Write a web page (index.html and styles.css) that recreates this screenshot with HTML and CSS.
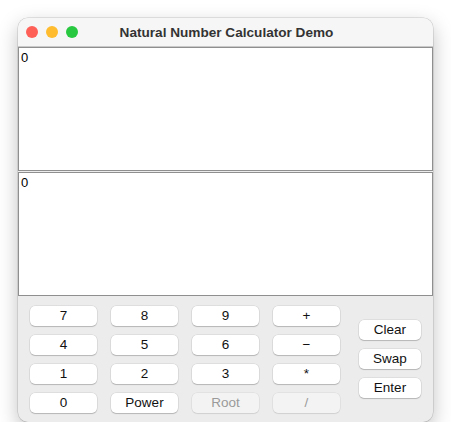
FILE: index.html
```html
<!DOCTYPE html>
<html>
<head>
<meta charset="utf-8">
<link rel="stylesheet" href="styles.css">
</head>
<body>
<div class="window">
  <div class="titlebar">
    <div class="lights">
      <span class="light red"></span>
      <span class="light yellow"></span>
      <span class="light green"></span>
    </div>
    <div class="title">Natural Number Calculator Demo</div>
  </div>
  <div class="area first">0</div>
  <div class="area second">0</div>
  <div class="panel">
    <div class="keys">
      <button class="btn">7</button>
      <button class="btn">8</button>
      <button class="btn">9</button>
      <button class="btn">+</button>
      <button class="btn">4</button>
      <button class="btn">5</button>
      <button class="btn">6</button>
      <button class="btn">&minus;</button>
      <button class="btn">1</button>
      <button class="btn">2</button>
      <button class="btn">3</button>
      <button class="btn">*</button>
      <button class="btn">0</button>
      <button class="btn">Power</button>
      <button class="btn disabled">Root</button>
      <button class="btn disabled">/</button>
    </div>
    <div class="side">
      <button class="btn">Clear</button>
      <button class="btn">Swap</button>
      <button class="btn">Enter</button>
    </div>
  </div>
</div>
</body>
</html>
```
FILE: styles.css
```css
html, body {
  margin: 0;
  padding: 0;
  background: #ffffff;
}
body {
  padding: 18px 0 0 18px;
  font-family: "Liberation Sans", Arial, sans-serif;
}
.window {
  width: 415px;
  height: 404px;
  border-radius: 10px;
  background: #ececec;
  box-shadow: 0 0 0 0.5px rgba(0,0,0,0.18), 0 7px 20px rgba(0,0,0,0.25);
  overflow: hidden;
  display: flex;
  flex-direction: column;
}
.titlebar {
  height: 28px;
  background: #f6f6f6;
  border-bottom: 1px solid #c9c9c9;
  position: relative;
  display: flex;
  align-items: center;
  justify-content: center;
  flex: none;
}
.lights {
  position: absolute;
  left: 8px;
  top: 8px;
  display: flex;
  gap: 8px;
}
.light {
  width: 12px;
  height: 12px;
  border-radius: 50%;
  display: block;
}
.red { background: #fe5f57; }
.yellow { background: #febc2e; }
.green { background: #28c840; }
.title {
  font-weight: bold;
  font-size: 13.6px;
  color: #333333;
  margin-left: 2px;
  margin-top: 1px;
}
.area {
  background: #ffffff;
  border: 1px solid #8f8f8f;
  font-size: 13px;
  color: #000;
  padding: 2px 2px;
  box-sizing: border-box;
  height: 124px;
  flex: none;
}
.area.second {
  margin-top: 1px;
}
.panel {
  flex: 1;
  display: flex;
  align-items: center;
  padding: 0 0 0 12px;
}
.keys {
  display: grid;
  grid-template-columns: repeat(4, 67px);
  grid-auto-rows: 20px;
  column-gap: 14px;
  row-gap: 9px;
}
.side {
  display: flex;
  flex-direction: column;
  gap: 9px;
  margin-left: 19px;
  width: 62px;
}
.btn {
  height: 20px;
  margin: 0;
  padding: 0;
  border: none;
  border-radius: 5px;
  background: #ffffff;
  box-shadow: 0 0 0 0.5px rgba(0,0,0,0.12), 0 1px 1px rgba(0,0,0,0.18);
  font-family: "Liberation Sans", Arial, sans-serif;
  font-size: 13.5px;
  color: #111111;
  line-height: 20px;
  text-align: center;
}
.btn.disabled {
  background: #f3f3f3;
  color: #9a9a9a;
  box-shadow: 0 0 0 0.5px rgba(0,0,0,0.08), 0 1px 1px rgba(0,0,0,0.08);
}
```
